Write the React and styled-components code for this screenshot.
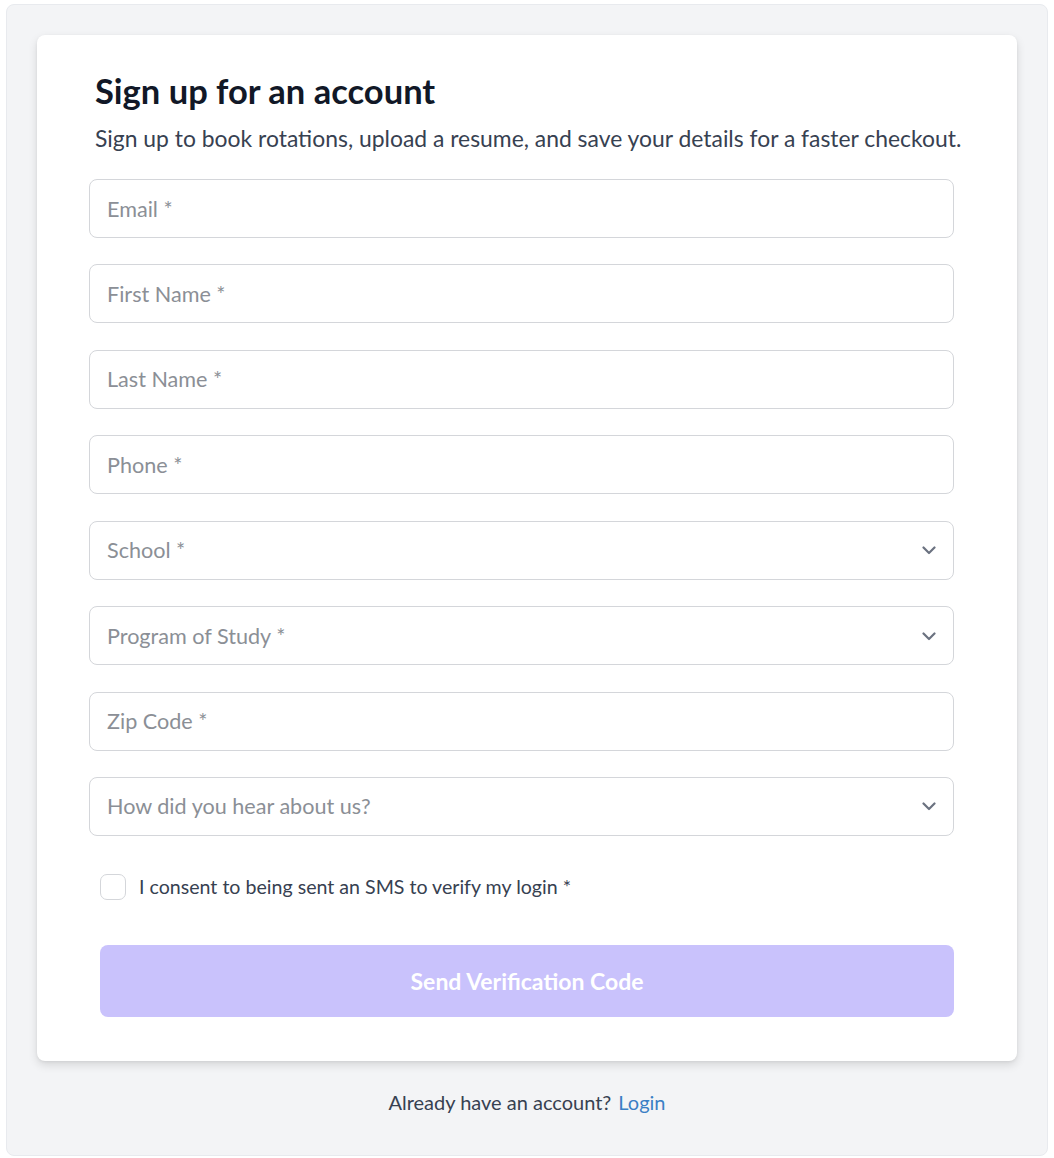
import React from "react";
import styled, { createGlobalStyle } from "styled-components";

const GlobalStyle = createGlobalStyle`
    body {
        margin: 0;
        background: #ffffff;
        font-family: Lato, "Liberation Sans", sans-serif;
    }
`;

const Page = styled.div`
    margin: 4px 6px 2px;
    padding: 30px 30px 0;
    height: 1152px;
    background: #f3f4f6;
    border: 1px solid #e8eaee;
    border-radius: 8px;
    box-sizing: border-box;
`;

const Card = styled.div`
    background: #ffffff;
    border-radius: 8px;
    box-shadow: 0 4px 10px rgba(0, 0, 0, 0.12), 0 1px 3px rgba(0, 0, 0, 0.06);
    padding: 35px 63px 44px 52px;
`;

const Title = styled.h1`
    margin: 0 0 0 6px;
    font-size: 34.5px;
    line-height: 42px;
    font-weight: 700;
    color: #111827;
`;

const Subtitle = styled.p`
    margin: 11px 0 26px 6px;
    font-size: 22.9px;
    line-height: 30px;
    color: #374151;
    white-space: nowrap;
`;

const Fields = styled.div`
    display: flex;
    flex-direction: column;
    gap: 26.43px;
`;

const Field = styled.div`
    position: relative;
    height: 59px;
    border: 1px solid #d4d6da;
    border-radius: 8px;
    box-sizing: border-box;
    display: flex;
    align-items: center;
    padding: 0 17px;
    font-size: 21.6px;
    color: #8b8f96;
`;

const Chevron = styled.svg`
    position: absolute;
    right: 17px;
    top: 50%;
    margin-top: -6px;
`;

const ConsentRow = styled.label`
    display: flex;
    align-items: center;
    gap: 13px;
    margin: 38px 0 0 11px;
    font-size: 19.6px;
    color: #374151;
`;

const Box = styled.span`
    width: 26px;
    height: 26px;
    border: 1px solid #d4d6da;
    border-radius: 7px;
    box-sizing: border-box;
`;

const SubmitButton = styled.button`
    display: block;
    width: calc(100% - 11px);
    margin: 45px 0 0 11px;
    height: 72px;
    border: none;
    border-radius: 8px;
    background: #c9c2fc;
    color: #ffffff;
    font-family: inherit;
    font-size: 23px;
    font-weight: 700;
`;

const Footer = styled.div`
    text-align: center;
    margin-top: 29px;
    font-size: 20px;
    color: #374151;
`;

const LoginLink = styled.a`
    color: #3a7fc5;
    text-decoration: none;
    margin-left: 7px;
`;

const fields = [
    { label: "Email *" },
    { label: "First Name *" },
    { label: "Last Name *" },
    { label: "Phone *" },
    { label: "School *", select: true },
    { label: "Program of Study *", select: true },
    { label: "Zip Code *" },
    { label: "How did you hear about us?", select: true },
];

const App = () => (
    <>
        <GlobalStyle />
        <Page>
            <Card>
                <Title>Sign up for an account</Title>
                <Subtitle>
                    Sign up to book rotations, upload a resume, and save your details for a faster checkout.
                </Subtitle>
                <Fields>
                    {fields.map((f, i) => (
                        <Field key={i}>
                            {f.label}
                            {f.select && (
                                <Chevron width="14" height="12" viewBox="0 0 14 12">
                                    <path d="M1.5 3.5 L7 9 L12.5 3.5" fill="none" stroke="#6b7280" strokeWidth="2.2" strokeLinecap="round" strokeLinejoin="round" />
                                </Chevron>
                            )}
                        </Field>
                    ))}
                </Fields>
                <ConsentRow>
                    <Box />
                    I consent to being sent an SMS to verify my login *
                </ConsentRow>
                <SubmitButton>Send Verification Code</SubmitButton>
            </Card>
            <Footer>
                Already have an account?<LoginLink href="#">Login</LoginLink>
            </Footer>
        </Page>
    </>
);

export default App;
